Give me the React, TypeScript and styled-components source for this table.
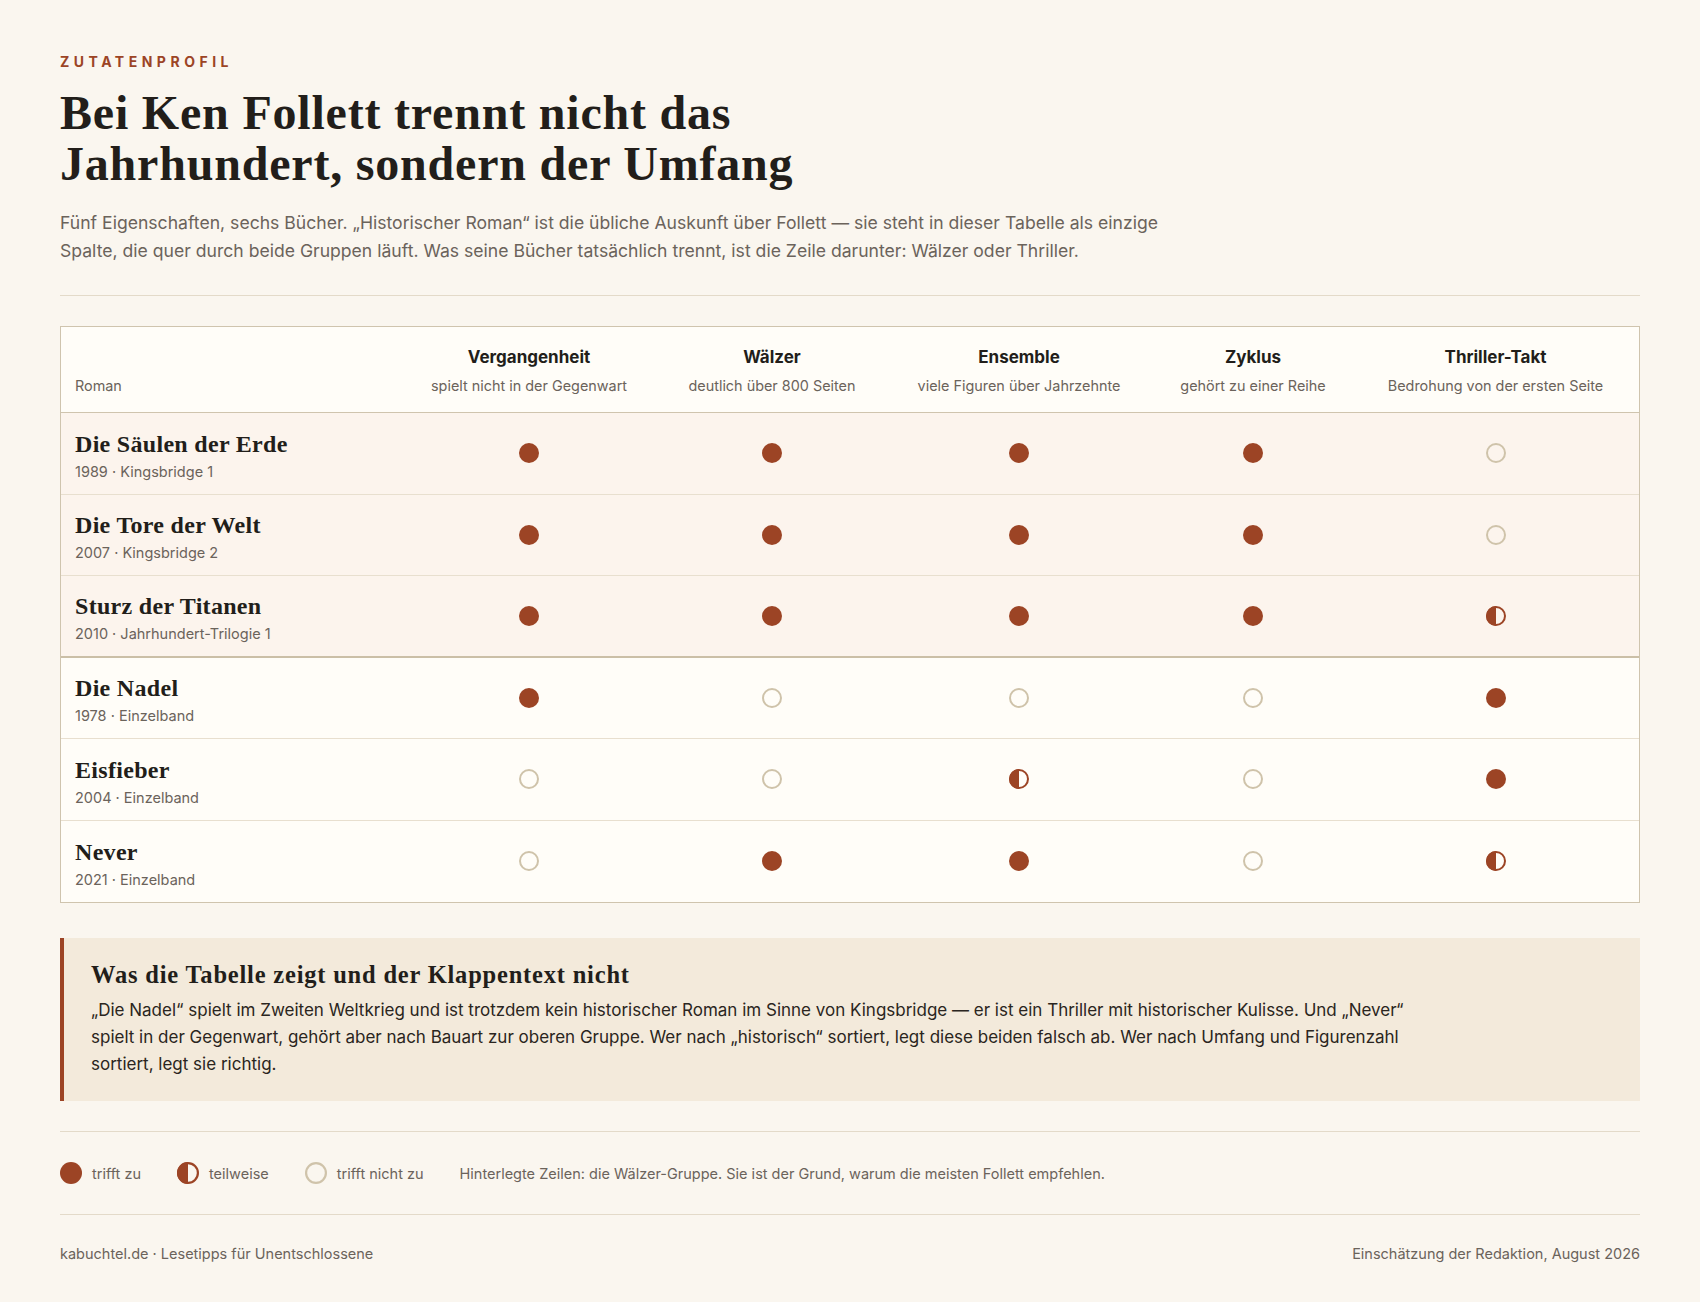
import React from "react";
import styled, { createGlobalStyle } from "styled-components";

const Global = createGlobalStyle`
  html, body { margin: 0; padding: 0; background: #faf6ef; }
  body { font-family: Inter, "Noto Sans", sans-serif; color: #221e1a; -webkit-font-smoothing: antialiased; }
  * { box-sizing: border-box; }
`;

const ACCENT = "#9c4425";
const SERIF = `"Liberation Serif", "DejaVu Serif", serif`;

const Page = styled.div`
  padding: 53px 60px 40px;
  width: 1700px;
`;

const Eyebrow = styled.div`
  font-size: 14px;
  font-weight: 700;
  letter-spacing: 4.5px;
  color: ${ACCENT};
  text-transform: uppercase;
`;

const Title = styled.h1`
  font-family: ${SERIF};
  font-weight: 700;
  font-size: 48px;
  line-height: 51px;
  margin: 17px 0 0;
  color: #221e1a;
  letter-spacing: 0.8px;
`;

const Lede = styled.p`
  font-size: 17.6px;
  line-height: 28px;
  color: #6b635b;
  max-width: 1125px;
  margin: 20px 0 0;
`;

const Rule = styled.hr<{ $space: number }>`
  border: 0;
  border-top: 1px solid #e3dac9;
  margin: ${(p) => p.$space}px 0;
`;

const Table = styled.div`
  border: 1px solid #cfc4ae;
  background: #fffdf8;
  display: grid;
  grid-template-columns: 337px 262px 224px 270px 198px 287px;
`;

const HeadCell = styled.div<{ $left?: boolean }>`
  display: flex;
  flex-direction: column;
  justify-content: flex-end;
  align-items: ${(p) => (p.$left ? "flex-start" : "center")};
  padding: ${(p) => (p.$left ? "0 14px" : "0 6px")} 17px;
  height: 86px;
  border-bottom: 1px solid #cfc4ae;
  text-align: center;
`;

const HeadLabel = styled.div`
  font-size: 17px;
  font-weight: 700;
  color: #221e1a;
  line-height: 20px;
  margin-bottom: 10px;
`;

const HeadSub = styled.div`
  font-size: 14.4px;
  color: #6b635b;
  line-height: 18px;
`;

const Cell = styled.div<{ $shade: boolean; $divider: "none" | "thin" | "thick"; $left?: boolean }>`
  height: 81.5px;
  background: ${(p) => (p.$shade ? "#fcf4ed" : "#fffdf8")};
  border-bottom: ${(p) =>
    p.$divider === "thick" ? "2px solid #cbbfa7" : p.$divider === "thin" ? "1px solid #e8dfcf" : "0"};
  display: flex;
  flex-direction: column;
  justify-content: center;
  align-items: ${(p) => (p.$left ? "flex-start" : "center")};
  padding: ${(p) => (p.$left ? "4px 14px 0" : "0")};
`;

const BookTitle = styled.div`
  font-family: ${SERIF};
  font-weight: 700;
  font-size: 24px;
  line-height: 28px;
  letter-spacing: 0.3px;
  color: #221e1a;
`;

const BookMeta = styled.div`
  font-size: 14.5px;
  color: #6b635b;
  margin-top: 5px;
  line-height: 18px;
`;

type Level = 0 | 1 | 2;

const DotSvg = ({ level, size = 20 }: { level: Level; size?: number }) => (
  <svg width={size} height={size} viewBox="0 0 20 20">
    {level === 2 && <circle cx="10" cy="10" r="10" fill={ACCENT} />}
    {level === 0 && <circle cx="10" cy="10" r="9" fill="none" stroke="#cfc3aa" strokeWidth="2" />}
    {level === 1 && (
      <>
        <circle cx="10" cy="10" r="9" fill="none" stroke={ACCENT} strokeWidth="2" />
        <path d="M10 0 A10 10 0 0 0 10 20 Z" fill={ACCENT} />
      </>
    )}
  </svg>
);

const Callout = styled.section`
  margin-top: 35px;
  background: #f3eadb;
  border-left: 4px solid ${ACCENT};
  padding: 23px 28px 23px 27px;
`;

const CalloutTitle = styled.h2`
  font-family: ${SERIF};
  font-weight: 700;
  font-size: 24.5px;
  line-height: 28px;
  letter-spacing: 0.8px;
  margin: 0 0 8px;
  color: #221e1a;
`;

const CalloutText = styled.p`
  font-size: 17px;
  line-height: 27px;
  margin: 0;
  max-width: 1320px;
  color: #2a2520;
`;

const Legend = styled.div`
  display: flex;
  align-items: center;
  gap: 36px;
  font-size: 14.5px;
  color: #6b635b;
`;

const LegendItem = styled.div`
  display: flex;
  align-items: center;
  gap: 10px;
`;

const Footer = styled.div`
  display: flex;
  justify-content: space-between;
  font-size: 14.5px;
  color: #6b635b;
`;

const columns = [
  { label: "Vergangenheit", sub: "spielt nicht in der Gegenwart" },
  { label: "Wälzer", sub: "deutlich über 800 Seiten" },
  { label: "Ensemble", sub: "viele Figuren über Jahrzehnte" },
  { label: "Zyklus", sub: "gehört zu einer Reihe" },
  { label: "Thriller-Takt", sub: "Bedrohung von der ersten Seite" },
];

const books: { title: string; meta: string; vals: Level[]; shade: boolean }[] = [
  { title: "Die Säulen der Erde", meta: "1989 · Kingsbridge 1", vals: [2, 2, 2, 2, 0], shade: true },
  { title: "Die Tore der Welt", meta: "2007 · Kingsbridge 2", vals: [2, 2, 2, 2, 0], shade: true },
  { title: "Sturz der Titanen", meta: "2010 · Jahrhundert-Trilogie 1", vals: [2, 2, 2, 2, 1], shade: true },
  { title: "Die Nadel", meta: "1978 · Einzelband", vals: [2, 0, 0, 0, 2], shade: false },
  { title: "Eisfieber", meta: "2004 · Einzelband", vals: [0, 0, 1, 0, 2], shade: false },
  { title: "Never", meta: "2021 · Einzelband", vals: [0, 2, 2, 0, 1], shade: false },
];

export default function App() {
  return (
    <Page>
      <Global />
      <Eyebrow>Zutatenprofil</Eyebrow>
      <Title>
        Bei Ken Follett trennt nicht das
        <br />
        Jahrhundert, sondern der Umfang
      </Title>
      <Lede>
        Fünf Eigenschaften, sechs Bücher. „Historischer Roman“ ist die übliche Auskunft über Follett — sie steht in
        dieser Tabelle als einzige Spalte, die quer durch beide Gruppen läuft. Was seine Bücher tatsächlich trennt, ist
        die Zeile darunter: Wälzer oder Thriller.
      </Lede>
      <Rule $space={30} />
      <Table>
        <HeadCell $left>
          <HeadSub>Roman</HeadSub>
        </HeadCell>
        {columns.map((c) => (
          <HeadCell key={c.label}>
            <HeadLabel>{c.label}</HeadLabel>
            <HeadSub>{c.sub}</HeadSub>
          </HeadCell>
        ))}
        {books.map((b, i) => {
          const divider: "none" | "thin" | "thick" = i === books.length - 1 ? "none" : i === 2 ? "thick" : "thin";
          return (
            <React.Fragment key={b.title}>
              <Cell $shade={b.shade} $divider={divider} $left>
                <BookTitle>{b.title}</BookTitle>
                <BookMeta>{b.meta}</BookMeta>
              </Cell>
              {b.vals.map((v, j) => (
                <Cell key={j} $shade={b.shade} $divider={divider}>
                  <DotSvg level={v} />
                </Cell>
              ))}
            </React.Fragment>
          );
        })}
      </Table>
      <Callout>
        <CalloutTitle>Was die Tabelle zeigt und der Klappentext nicht</CalloutTitle>
        <CalloutText>
          „Die Nadel“ spielt im Zweiten Weltkrieg und ist trotzdem kein historischer Roman im Sinne von Kingsbridge — er
          ist ein Thriller mit historischer Kulisse. Und „Never“ spielt in der Gegenwart, gehört aber nach Bauart zur
          oberen Gruppe. Wer nach „historisch“ sortiert, legt diese beiden falsch ab. Wer nach Umfang und Figurenzahl
          sortiert, legt sie richtig.
        </CalloutText>
      </Callout>
      <Rule $space={30} />
      <Legend>
        <LegendItem>
          <DotSvg level={2} size={22} />
          trifft zu
        </LegendItem>
        <LegendItem>
          <DotSvg level={1} size={22} />
          teilweise
        </LegendItem>
        <LegendItem>
          <DotSvg level={0} size={22} />
          trifft nicht zu
        </LegendItem>
        <span>Hinterlegte Zeilen: die Wälzer-Gruppe. Sie ist der Grund, warum die meisten Follett empfehlen.</span>
      </Legend>
      <Rule $space={30} />
      <Footer>
        <span>kabuchtel.de · Lesetipps für Unentschlossene</span>
        <span>Einschätzung der Redaktion, August 2026</span>
      </Footer>
    </Page>
  );
}
